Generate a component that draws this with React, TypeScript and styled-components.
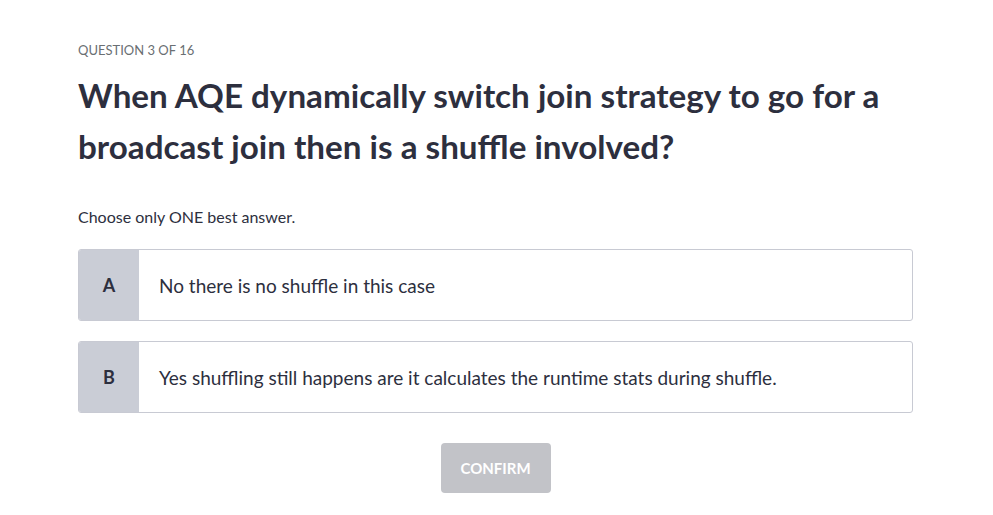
import styled, { createGlobalStyle } from "styled-components";

const GlobalStyle = createGlobalStyle`
  body {
    margin: 0;
    background: #ffffff;
    font-family: Lato, "Open Sans", sans-serif;
    color: #2d2f3e;
  }
`;

const Page = styled.div`
  width: 835px;
  padding: 41px 80px 0 78px;
  display: flex;
  flex-direction: column;
`;

const Counter = styled.div`
  font-size: 13px;
  line-height: 18px;
  color: #6a6f73;
  text-transform: uppercase;
`;

const Title = styled.h1`
  margin: 11px 0 0;
  font-size: 33.2px;
  line-height: 51px;
  font-weight: 700;
  color: #2d2f3e;
`;

const Hint = styled.div`
  margin-top: 35px;
  font-size: 16px;
  line-height: 20px;
  color: #2d2f3e;
`;

const OptionList = styled.div`
  margin-top: 22px;
  display: flex;
  flex-direction: column;
  gap: 20px;
`;

const Option = styled.button`
  display: flex;
  align-items: stretch;
  height: 72px;
  padding: 0;
  border: 1px solid #c8cad3;
  border-radius: 3px;
  background: #ffffff;
  overflow: hidden;
  cursor: pointer;
  font-family: inherit;
  text-align: left;
`;

const Letter = styled.span`
  width: 60px;
  flex-shrink: 0;
  display: flex;
  align-items: center;
  justify-content: center;
  background: #cacdd6;
  font-size: 18px;
  font-weight: 700;
  color: #2d2f3e;
`;

const OptionText = styled.span`
  display: flex;
  align-items: center;
  padding-left: 20px;
  font-size: 19px;
  color: #2d2f3e;
`;

const Actions = styled.div`
  margin-top: 30px;
  display: flex;
  justify-content: center;
`;

const ConfirmButton = styled.button`
  width: 110px;
  height: 50px;
  border: none;
  border-radius: 4px;
  background: #c2c3c8;
  color: #ffffff;
  font-family: inherit;
  font-size: 15px;
  font-weight: 700;
  cursor: not-allowed;
`;

const answers = [
  { key: "A", text: "No there is no shuffle in this case" },
  {
    key: "B",
    text: "Yes shuffling still happens are it calculates the runtime stats during shuffle.",
  },
];

export default function App() {
  return (
    <>
      <GlobalStyle />
      <Page>
        <Counter>Question 3 of 16</Counter>
        <Title>
          When AQE dynamically switch join strategy to go for a broadcast join
          then is a shuffle involved?
        </Title>
        <Hint>Choose only ONE best answer.</Hint>
        <OptionList>
          {answers.map((a) => (
            <Option key={a.key}>
              <Letter>{a.key}</Letter>
              <OptionText>{a.text}</OptionText>
            </Option>
          ))}
        </OptionList>
        <Actions>
          <ConfirmButton disabled>CONFIRM</ConfirmButton>
        </Actions>
      </Page>
    </>
  );
}
